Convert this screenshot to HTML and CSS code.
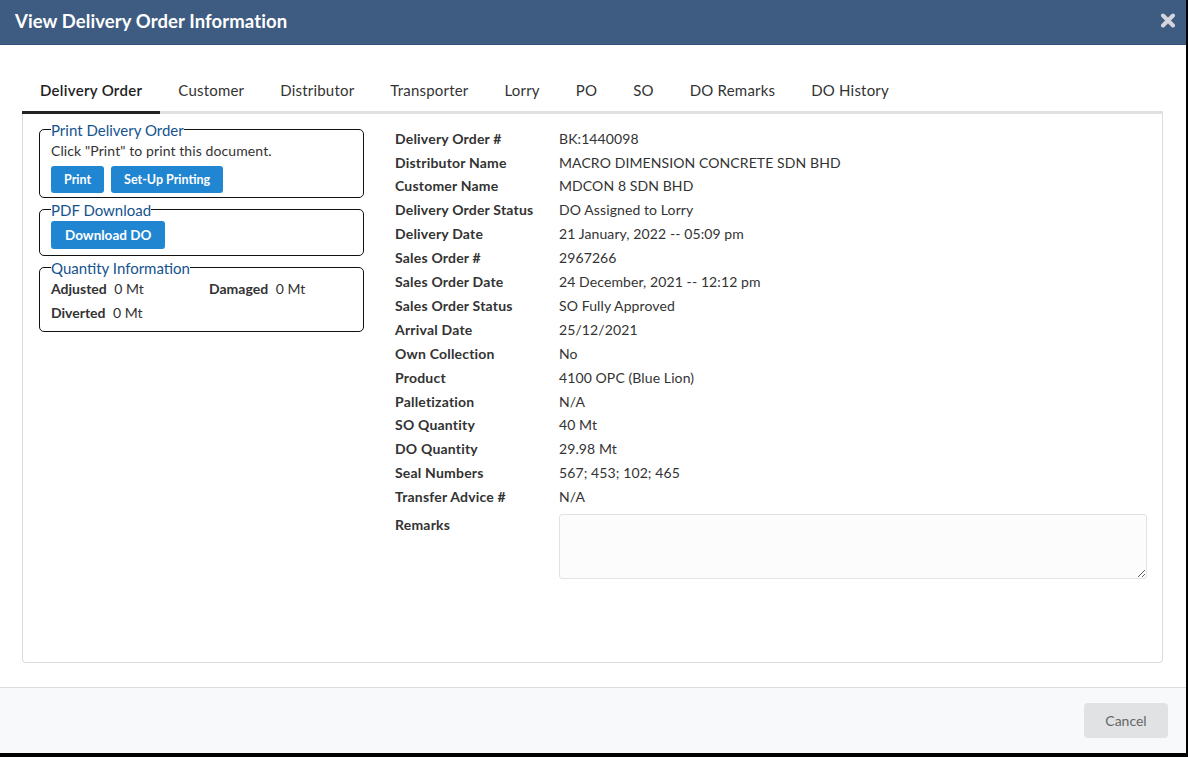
FILE: index.html
```html
<!DOCTYPE html>
<html>
<head>
<meta charset="utf-8">
<link rel="stylesheet" href="styles.css">
</head>
<body>
<div class="modal">
  <div class="header">
    <h1 class="title">View Delivery Order Information</h1>
    <svg class="close" width="16" height="15" viewBox="0 0 16 15"><path d="M3 2.5 L13 12.5 M13 2.5 L3 12.5" stroke="#d3d6db" stroke-width="4" stroke-linecap="round"/></svg>
  </div>
  <div class="body">
    <div class="tabs">
      <div class="tab active">Delivery Order</div>
      <div class="tab">Customer</div>
      <div class="tab">Distributor</div>
      <div class="tab">Transporter</div>
      <div class="tab">Lorry</div>
      <div class="tab">PO</div>
      <div class="tab">SO</div>
      <div class="tab">DO Remarks</div>
      <div class="tab">DO History</div>
    </div>
    <div class="panel">
      <div class="left">
        <fieldset class="box">
          <legend>Print Delivery Order</legend>
          <div class="note">Click "Print" to print this document.</div>
          <div class="btns">
            <button class="btn">Print</button>
            <button class="btn">Set-Up Printing</button>
          </div>
        </fieldset>
        <fieldset class="box">
          <legend>PDF Download</legend>
          <button class="btn big">Download DO</button>
        </fieldset>
        <fieldset class="box">
          <legend>Quantity Information</legend>
          <div class="qty">
            <div><b>Adjusted</b> 0 Mt</div>
            <div><b>Damaged</b> 0 Mt</div>
            <div><b>Diverted</b> 0 Mt</div>
          </div>
        </fieldset>
      </div>
      <div class="details">
        <div class="lbl">Delivery Order #</div><div class="val">BK:1440098</div>
        <div class="lbl">Distributor Name</div><div class="val">MACRO DIMENSION CONCRETE SDN BHD</div>
        <div class="lbl">Customer Name</div><div class="val">MDCON 8 SDN BHD</div>
        <div class="lbl">Delivery Order Status</div><div class="val">DO Assigned to Lorry</div>
        <div class="lbl">Delivery Date</div><div class="val">21 January, 2022 -- 05:09 pm</div>
        <div class="lbl">Sales Order #</div><div class="val">2967266</div>
        <div class="lbl">Sales Order Date</div><div class="val">24 December, 2021 -- 12:12 pm</div>
        <div class="lbl">Sales Order Status</div><div class="val">SO Fully Approved</div>
        <div class="lbl">Arrival Date</div><div class="val">25/12/2021</div>
        <div class="lbl">Own Collection</div><div class="val">No</div>
        <div class="lbl">Product</div><div class="val">4100 OPC (Blue Lion)</div>
        <div class="lbl">Palletization</div><div class="val">N/A</div>
        <div class="lbl">SO Quantity</div><div class="val">40 Mt</div>
        <div class="lbl">DO Quantity</div><div class="val">29.98 Mt</div>
        <div class="lbl">Seal Numbers</div><div class="val">567; 453; 102; 465</div>
        <div class="lbl">Transfer Advice #</div><div class="val">N/A</div>
        <div class="lbl remarks-lbl">Remarks</div><div class="val"><textarea class="remarks"></textarea></div>
      </div>
    </div>
  </div>
  <div class="footer">
    <button class="cancel">Cancel</button>
  </div>
</div>
</body>
</html>
```
FILE: styles.css
```css
html, body {
  margin: 0;
  padding: 0;
  background: #000;
  font-family: Lato, "Open Sans", sans-serif;
}
.modal {
  width: 1186px;
  height: 753px;
  background: #fff;
  display: flex;
  flex-direction: column;
}
.header {
  height: 45px;
  background: #3e5b81;
  display: flex;
  align-items: center;
  justify-content: space-between;
  padding: 0 10px 2px 15px;
  box-sizing: border-box;
  border-bottom: 1px solid #34507a;
}
.title {
  margin: 0;
  color: #fff;
  font-size: 18.5px;
  font-weight: 700;
  letter-spacing: 0.1px;
}
.close {
  display: block;
}
.body {
  flex: 1;
  padding: 24px 23px 24px 22px;
}
.tabs {
  display: flex;
  border-bottom: 3px solid #e1e1e1;
  height: 42px;
}
.tab {
  padding: 0 18px;
  font-size: 15px;
  letter-spacing: 0.2px;
  color: #333;
  line-height: 42px;
  margin-bottom: -3px;
  border-bottom: 3px solid transparent;
}
.tab.active {
  color: #1e1e1e;
  font-weight: 600;
  letter-spacing: 0.3px;
  border-bottom-color: #222;
}
.panel {
  border: 1px solid #dcdcdc;
  border-top: none;
  border-radius: 0 0 4px 4px;
  height: 549px;
  box-sizing: border-box;
  padding: 8px 15px 0 16px;
  display: grid;
  grid-template-columns: 325px 1fr;
  column-gap: 31px;
  align-items: start;
}
.left {
  display: flex;
  flex-direction: column;
  gap: 4px;
}
.box {
  margin: 0;
  border: 1px solid #111;
  border-radius: 5px;
  padding: 0 11px 4px;
}
.box legend {
  padding: 0;
  color: #15538f;
  font-size: 15px;
  line-height: 16px;
}
.note {
  font-size: 14px;
  letter-spacing: 0.1px;
  color: #333;
  line-height: 19px;
  margin-top: 3px;
}
.btns {
  display: flex;
  gap: 7px;
  margin-top: 6px;
}
.btn {
  background: #2186d2;
  color: #fff;
  border: none;
  border-radius: 3px;
  font-family: Lato, sans-serif;
  font-weight: 700;
  font-size: 12.5px;
  height: 27px;
  padding: 0 13px;
}
.btn.big {
  font-size: 13.5px;
  height: 28px;
  padding: 0 14px;
  margin-top: 3px;
}
.box:nth-child(2) {
  padding-bottom: 6px;
}
.box:nth-child(3) {
  padding-bottom: 6px;
}
.qty {
  display: grid;
  grid-template-columns: 158px 1fr;
  font-size: 14px;
  color: #333;
  line-height: 24px;
  margin-top: 1px;
}
.qty b {
  margin-right: 4px;
  color: #333;
}
.details {
  display: grid;
  grid-template-columns: 164px 1fr;
  font-size: 14px;
  letter-spacing: 0.1px;
  line-height: 23.9px;
  color: #333;
  padding-top: 5px;
}
.lbl {
  font-weight: 700;
  letter-spacing: 0.2px;
}
.remarks-lbl {
  margin-top: 4px;
}
.remarks {
  display: block;
  width: 100%;
  box-sizing: border-box;
  height: 65px;
  margin-top: 5px;
  border: 1px solid #e2e2e2;
  border-radius: 3px;
  background: #fcfcfc;
}
.footer {
  height: 66px;
  background: #f8f9fa;
  border-top: 1px solid #dcdcdc;
  display: flex;
  align-items: center;
  justify-content: flex-end;
  padding: 0 18px 0 0;
}
.cancel {
  background: #e1e2e4;
  color: #666;
  border: none;
  border-radius: 4px;
  font-family: Lato, sans-serif;
  font-size: 14px;
  width: 84px;
  height: 35px;
}
```
